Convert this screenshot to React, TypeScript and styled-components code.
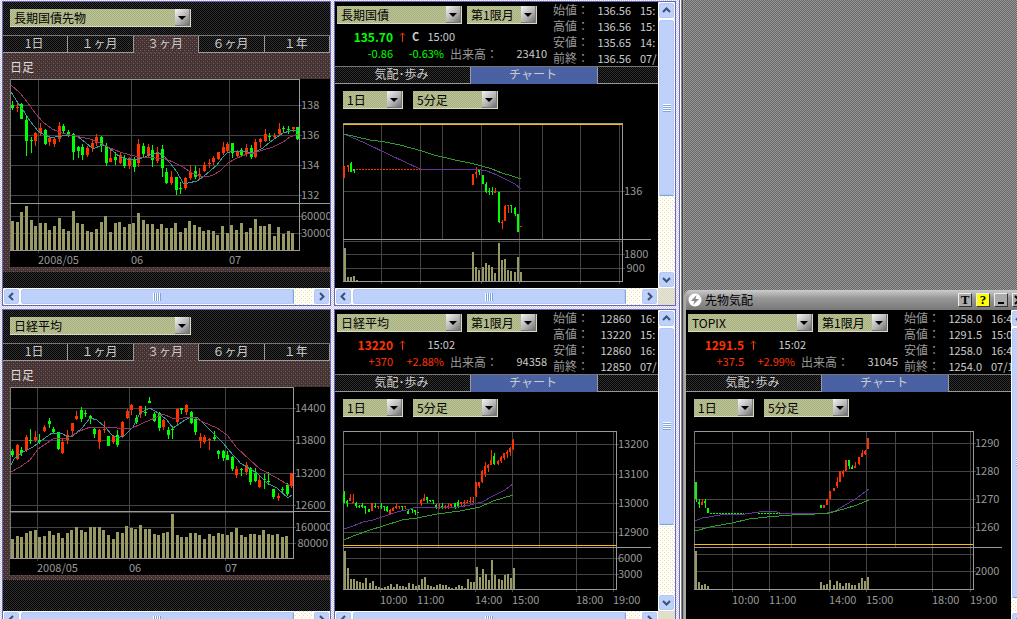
import React from "react";
import styled, { createGlobalStyle, css } from "styled-components";

const GlobalStyle = createGlobalStyle`
  html, body { margin: 0; height: 100%; background: #808080; }
  body {
    font: 12px/16px "Noto Sans CJK JP", sans-serif;
    color: #ccc;
    overflow: hidden;
  }
  *, *::before, *::after { box-sizing: border-box; }
  #root { height: 100%; }
`;

const checker = (a: string, b: string) =>
  `repeating-conic-gradient(${a} 0 25%, ${b} 0 50%) 0 0 / 2px 2px`;
const dots = (color: string, at: string) =>
  `radial-gradient(circle at 0 0, ${color} 1px, transparent 1px) ${at} / 4px 4px`;

const DARK = checker("#000", "#333");
const MAROON = `${dots("#666", "0 0")}, ${dots("#666", "2px 2px")}, ${dots("#633", "2px 0")}, ${dots("#633", "0 2px")}, #433`;
const BLUE = checker("#446aa4", "#5058a4");
const LAVENDER = checker("#c6c6f0", "#fff");
const PURPLE = "#6a66b4";

/* ---------- page frame ---------- */

const Desktop = styled.main`
  display: grid;
  grid-template-columns: 329fr 342fr 338fr;
  gap: 3px;
  height: 100%;
  padding-left: 2px;
  overflow: hidden;
  background: ${LAVENDER};
`;

const Stack = styled.div`
  display: flex;
  flex-direction: column;
  gap: 3px;
  padding-top: 1px;
  min-width: 0;
`;

const Panel = styled.section<{ $body: number }>`
  display: grid;
  grid-template-columns: minmax(0, 1fr) auto;
  grid-template-rows: ${(p) => p.$body}px 17px;
  flex: none;
  border: 1px solid ${PURPLE};
`;

const PanelBody = styled.div<{ $dark?: boolean }>`
  overflow: hidden;
  background: ${(p) => (p.$dark ? DARK : "#000")};
`;

const Corner = styled.div`
  background: ${checker("#e8e4c8", "#d8d8d0")};
`;

/* ---------- scroll bars ---------- */

const Bar = styled.div<{ $vertical?: boolean }>`
  display: flex;
  flex-direction: ${(p) => (p.$vertical ? "column" : "row")};
  ${(p) => (p.$vertical ? "width: 17px;" : "height: 17px;")}
  background: ${dots("#e4d4c4", "0 0")}, ${dots("#e4d4d4", "2px 2px")}, #fffff4;
`;

const face = css`
  background: ${checker("#c6d0ff", "#b6d2f6")};
  border: 1px solid #fff;
  border-radius: 3px;
  box-shadow: inset 0 0 0 1px #b4c8f4;
`;

const ScrollButton = styled.button`
  ${face}
  flex: none;
  display: flex;
  align-items: center;
  justify-content: center;
  width: 17px;
  height: 17px;
  padding: 0;
`;

const Thumb = styled.div<{ $size: number; $vertical?: boolean }>`
  ${face}
  flex: ${(p) => p.$size} 1 0;
  display: flex;
  align-items: center;
  justify-content: center;
  ${(p) =>
    p.$vertical ? "border-bottom-color: #7fa6dc;" : "border-right-color: #7fa6dc;"}

  &::before {
    content: "";
    width: 8px;
    height: 8px;
    background: repeating-linear-gradient(
      ${(p) => (p.$vertical ? "180deg" : "90deg")},
      #fff 0 1px,
      #7ea4e4 1px 2px
    );
  }
`;

const Rest = styled.div<{ $size: number }>`
  flex: ${(p) => p.$size} 1 0;
`;

const turns = { left: 0, up: 90, right: 180, down: 270 };

function Chevron({ to }: { to: keyof typeof turns }) {
  return (
    <svg width="9" height="9" viewBox="0 0 9 9" aria-hidden="true">
      <path
        d="M6 1 L2.5 4.5 L6 8"
        fill="none"
        stroke="#3c5078"
        strokeWidth="2"
        transform={`rotate(${turns[to]} 4.5 4.5)`}
      />
    </svg>
  );
}

function ScrollBar({ vertical, thumb, rest }: { vertical?: boolean; thumb: number; rest: number }) {
  return (
    <Bar $vertical={vertical}>
      <ScrollButton aria-label={vertical ? "上へ" : "左へ"}>
        <Chevron to={vertical ? "up" : "left"} />
      </ScrollButton>
      <Thumb $size={thumb} $vertical={vertical} />
      <Rest $size={rest} />
      <ScrollButton aria-label={vertical ? "下へ" : "右へ"}>
        <Chevron to={vertical ? "down" : "right"} />
      </ScrollButton>
    </Bar>
  );
}

/* ---------- drop-downs ---------- */

const Picker = styled.span<{ $width: number }>`
  position: relative;
  display: block;
  flex: none;
  width: ${(p) => p.$width}px;
  height: 18px;
  border: solid #ddd8c0;
  border-width: 0 1px 1px 0;
  background: ${checker("#a2b27e", "#c2c298")};

  &::before {
    content: "";
    position: absolute;
    inset: 0 0 0 auto;
    width: 15px;
    background: linear-gradient(135deg, #f4f4f4, #b0b0b0 60%, #707070);
    border: solid #777;
    border-width: 0 1px 1px 0;
  }
  &::after {
    content: "";
    position: absolute;
    top: 7px;
    right: 4px;
    border: solid transparent;
    border-width: 4px 4px 0;
    border-top-color: #000;
  }
`;

const Select = styled.select`
  position: relative;
  z-index: 1;
  appearance: none;
  display: block;
  width: 100%;
  height: 17px;
  padding: 0 16px 0 4px;
  border: 0;
  background: transparent;
  color: #000;
  font: 12px/16px "Noto Sans CJK JP", sans-serif;
`;

function DropDown({ label, value, width }: { label: string; value: string; width: number }) {
  return (
    <Picker $width={width}>
      <Select aria-label={label} defaultValue={value}>
        <option>{value}</option>
      </Select>
    </Picker>
  );
}

/* ---------- tabs ---------- */

const Tabs = styled.div<{ $columns: string }>`
  display: grid;
  grid-template-columns: ${(p) => p.$columns};
  height: 18px;
  border-top: 1px solid #777;
  background: ${DARK};
`;

const Tab = styled.button<{ $active?: string }>`
  padding: 0 2px 2px 0;
  border: solid #999;
  border-width: 0 1px 1px 0;
  background: none;
  color: #ccc;
  font: 12px/14px "Noto Sans CJK JP", sans-serif;
  text-align: center;
  ${(p) => p.$active && css`background: ${p.$active}; border-bottom: 0; padding-bottom: 3px;`}
`;

const TabRest = styled.div`
  border-bottom: 1px solid #999;
`;

/* ---------- charts ---------- */

type Candle = [string, number, number, number, number];

interface ChartData {
  view: [number, number, number, number];
  frame: { left: number; right: number; top: number; mid: number; bottom: number };
  tail: number;
  gridX: [number, string][];
  shortX?: number[];
  gridY: [number, string][];
  extraY?: number[];
  limit?: number;
  dateY: number;
  lines: [string, string][];
  dashes?: [string, number, number, number][];
  candles: [number, ...Candle][];
  bars: [number, number][];
  barWidth: number;
}

const Plot = styled.svg`
  display: block;
  text {
    font: 11px "Noto Sans CJK JP", sans-serif;
    fill: #999;
    white-space: pre;
  }
`;

const colours: Record<string, string> = { g: "#0f0", r: "#f30" };

function Chart({ data, label }: { data: ChartData; label: string }) {
  const { view, frame: f } = data;
  return (
    <Plot width={view[2]} height={view[3]} viewBox={view.join(" ")} role="img" aria-label={label}>
      <g shapeRendering="crispEdges">
        {data.gridX.map(([x]) => (
          <rect key={x} x={x} y={f.top} width="1" height={f.bottom - f.top + 3} fill="#444" />
        ))}
        {(data.shortX ?? []).map((x) => (
          <rect key={x} x={x} y={f.top} width="1" height={f.mid - f.top} fill="#444" />
        ))}
        {data.gridY.map(([y]) => (
          <rect key={y} x={f.left} y={y} width={f.right - f.left + 3} height="1" fill="#444" />
        ))}
        {(data.extraY ?? []).map((y) => (
          <rect key={y} x={f.left} y={y} width={f.right - f.left} height="1" fill="#444" />
        ))}
        {data.bars.map(([x, h], i) => (
          <rect key={i} x={Math.round(x - data.barWidth / 2)} y={f.bottom - h} width={data.barWidth} height={h} fill="#996" />
        ))}
        <rect x={f.left} y={f.top} width={f.right - f.left} height="1" fill="#999" />
        <rect x={f.left} y={f.top} width="1" height={f.bottom - f.top} fill="#777" />
        <rect x={f.right} y={f.top} width="1" height={f.bottom - f.top + 1} fill="#999" />
        <rect x={f.left} y={f.mid} width={data.tail - f.left} height="1" fill="#999" />
        <rect x={f.left} y={f.bottom} width={f.right - f.left} height="1" fill="#999" />
        {data.limit && (
          <rect x={f.left} y={data.limit} width={f.right - f.left} height="1" fill="#fb0" />
        )}
        {(data.dashes ?? []).map(([c, x1, x2, y]) => (
          <path key={x1} d={`M${x1} ${y}.5H${x2}`} stroke={colours[c]} strokeDasharray="2 1" />
        ))}
        {data.candles.map(([x, c, high, low, top, bottom], i) => (
          <g key={i} fill={colours[c]}>
            <rect x={Math.round(x)} y={high} width="1" height={low - high} />
            <rect
              x={Math.round(x) - 1}
              y={top}
              width={data.barWidth > 2 ? 3 : 2}
              height={Math.max(bottom - top, 1)}
            />
          </g>
        ))}
        {data.lines.map(([stroke, points]) => (
          <polyline key={points} points={points} fill="none" stroke={stroke} />
        ))}
      </g>
      {data.gridY.map(([y, t]) => (
        <text key={t} x={f.right + 2} y={y + 4}>{t}</text>
      ))}
      {data.gridX.map(([x, t]) => (
        <text key={t} x={x} y={data.dateY}>{t}</text>
      ))}
    </Plot>
  );
}

const spread = (start: number, step: number, list: Candle[]) =>
  list.map((c, i) => [start + step * i, ...c] as [number, ...Candle]);
const columns = (start: number, step: number, list: number[]) =>
  list.map((h, i) => [start + step * i, h] as [number, number]);

const TEAL = "#399";
const ROSE = "#936";
const VIOLET = "#639";
const LEAF = "#393";

const bondDaily: ChartData = {
  view: [10, 79, 320, 188],
  frame: { left: 10, right: 299, top: 79, mid: 203, bottom: 250 },
  tail: 330,
  gridX: [[38, "2008/05"], [131, "06"], [229, "07"]],
  gridY: [[105, "138"], [135, "136"], [165, "134"], [195, "132"], [216, "60000"], [233, "30000"]],
  dateY: 264,
  barWidth: 3,
  lines: [
    [TEAL, "11,92 18,103 23,110 30,121 38,131 45,135 50,137 55,137 62,136 72,135 78,137 85,142 93,149 102,145 107,146 115,153 120,157 127,159 134,160 142,158 150,155 158,153 163,155 170,163 177,172 183,183 188,183 197,181 203,177 210,171 217,165 222,158 227,153 233,151 240,151 248,152 255,152 263,148 270,142 277,137 283,133 290,131 298,130"],
    [ROSE, "11,85 20,93 28,103 35,113 43,122 52,129 62,133 70,135 80,137 90,139 100,143 110,148 120,152 130,155 140,157 155,158 163,158 173,162 183,167 192,173 200,176 207,177 213,175 220,171 228,163 237,158 247,154 254,153 263,150 273,147 283,142 290,137 298,134"],
  ],
  candles: spread(12, 4.68, [
    ["g", 101, 110, 105, 108], ["r", 103, 112, 107, 108], ["g", 103, 119, 104, 119], ["g", 115, 156, 120, 141],
    ["g", 137, 153, 140, 141], ["r", 132, 146, 133, 141], ["r", 123, 136, 128, 133], ["g", 129, 145, 130, 144],
    ["r", 136, 146, 138, 142], ["r", 137, 147, 139, 144], ["r", 122, 142, 126, 139], ["g", 124, 133, 126, 131],
    ["g", 130, 137, 132, 135], ["g", 133, 160, 134, 152], ["g", 146, 158, 147, 151], ["g", 144, 160, 147, 155],
    ["r", 146, 157, 148, 155], ["r", 141, 152, 143, 148], ["r", 134, 146, 137, 143], ["g", 136, 152, 137, 145],
    ["g", 143, 166, 146, 163], ["r", 150, 162, 158, 162], ["g", 152, 165, 157, 160], ["r", 153, 164, 155, 163],
    ["g", 155, 168, 158, 166], ["r", 157, 169, 158, 166], ["g", 157, 172, 159, 167], ["r", 139, 167, 144, 163],
    ["g", 143, 157, 146, 154], ["r", 144, 157, 147, 155], ["g", 145, 167, 150, 160], ["r", 147, 163, 152, 161],
    ["g", 145, 177, 149, 168], ["g", 168, 184, 172, 183], ["r", 171, 185, 177, 183], ["g", 177, 195, 177, 190],
    ["g", 182, 194, 188, 189], ["r", 177, 190, 178, 188], ["r", 165, 180, 172, 178], ["g", 166, 179, 171, 177],
    ["r", 168, 179, 174, 176], ["r", 162, 172, 165, 171], ["r", 159, 168, 163, 164], ["r", 156, 165, 158, 162],
    ["r", 152, 160, 152, 159], ["r", 142, 155, 147, 153], ["r", 142, 153, 144, 151], ["g", 143, 158, 143, 153],
    ["r", 150, 157, 151, 156], ["g", 148, 157, 150, 155], ["r", 144, 157, 148, 154], ["g", 145, 159, 148, 157],
    ["r", 139, 158, 142, 157], ["r", 138, 148, 139, 142], ["r", 129, 142, 134, 141], ["g", 133, 141, 136, 137],
    ["r", 133, 139, 136, 137], ["r", 123, 135, 129, 134], ["g", 126, 133, 128, 129], ["g", 126, 134, 129, 130],
    ["r", 127, 132, 127, 129], ["g", 127, 140, 127, 139],
  ]),
  bars: columns(12.5, 4.67, [
    29, 28, 38, 44, 30, 24, 27, 27, 20, 24, 32, 21, 19, 39, 27, 26, 19, 18, 21, 28, 34, 18, 27, 28, 23, 26, 27, 37, 30, 26, 26,
    21, 26, 22, 22, 27, 18, 22, 29, 25, 23, 19, 20, 19, 15, 24, 17, 25, 20, 27, 18, 22, 31, 24, 24, 26, 14, 23, 16, 19, 17,
  ]),
};

const nikkeiDaily: ChartData = {
  view: [10, 79, 320, 188],
  frame: { left: 10, right: 293, top: 79, mid: 203, bottom: 250 },
  tail: 330,
  gridX: [[37, "2008/05"], [129, "06"], [225, "07"]],
  gridY: [[100, "14400"], [132, "13800"], [165, "13200"], [197, "12600"], [219, "160000"], [235, " 80000"]],
  extraY: [204],
  dateY: 264,
  barWidth: 3,
  lines: [
    [TEAL, "11,157 14,151 23,144 33,139 42,132 52,125 62,125 67,129 73,128 82,120 90,110 97,112 105,119 112,127 118,130 125,127 133,119 140,105 150,100 158,105 167,112 173,120 182,114 190,109 197,109 205,117 213,125 223,135 233,147 238,152 240,155 257,165 267,175 277,180 288,190 292,187"],
    [ROSE, "11,164 20,159 30,152 38,141 53,131 67,130 80,123 90,119 103,119 117,120 130,121 143,115 155,110 163,106 172,110 183,110 193,109 203,114 217,120 227,127 237,140 250,152 260,161 277,170 290,178"],
  ],
  candles: spread(12, 4.58, [
    ["g", 141, 149, 143, 147], ["r", 136, 152, 137, 151], ["g", 139, 148, 142, 145], ["r", 127, 144, 129, 142],
    ["g", 121, 136, 132, 133], ["r", 123, 134, 129, 132], ["g", 126, 136, 132, 134], ["r", 117, 124, 119, 123],
    ["g", 110, 120, 113, 116], ["g", 119, 125, 121, 124], ["g", 124, 142, 124, 141], ["r", 130, 146, 134, 145],
    ["r", 122, 136, 127, 132], ["r", 115, 127, 115, 123], ["r", 103, 112, 108, 111], ["g", 99, 114, 102, 111],
    ["g", 102, 109, 105, 106], ["g", 107, 116, 108, 111], ["g", 119, 130, 121, 126], ["r", 121, 141, 122, 134],
    ["r", 113, 125, 121, 122], ["g", 128, 138, 128, 138], ["r", 127, 136, 128, 134], ["g", 122, 139, 127, 137],
    ["r", 113, 130, 114, 129], ["r", 101, 111, 103, 110], ["r", 96, 107, 97, 102], ["g", 107, 116, 110, 114],
    ["r", 98, 110, 98, 106], ["g", 98, 108, 104, 105], ["g", 89, 95, 93, 95], ["g", 104, 114, 106, 113],
    ["g", 104, 123, 105, 120], ["r", 111, 122, 112, 119], ["g", 119, 131, 122, 127], ["g", 118, 131, 121, 122],
    ["r", 100, 116, 101, 114], ["g", 100, 106, 100, 102], ["r", 96, 107, 97, 104], ["g", 103, 116, 104, 115],
    ["g", 109, 127, 111, 124], ["r", 125, 140, 129, 133], ["r", 127, 136, 129, 134], ["r", 130, 142, 131, 132],
    ["g", 123, 133, 129, 131], ["g", 142, 151, 143, 146], ["g", 142, 153, 143, 150], ["g", 143, 152, 147, 152],
    ["g", 148, 163, 149, 161], ["r", 158, 170, 161, 167], ["g", 160, 168, 161, 162], ["r", 154, 167, 157, 164],
    ["g", 159, 177, 160, 174], ["g", 160, 174, 165, 173], ["r", 168, 180, 172, 179], ["g", 166, 181, 171, 172],
    ["g", 164, 177, 173, 174], ["g", 181, 191, 181, 189], ["r", 185, 193, 188, 190], ["g", 179, 184, 181, 182],
    ["g", 175, 188, 177, 186], ["r", 165, 180, 165, 178],
  ]),
  bars: columns(12.5, 4.57, [
    19, 22, 21, 25, 27, 28, 21, 22, 27, 23, 25, 20, 25, 28, 31, 28, 26, 31, 31, 31, 28, 23, 19, 26, 25, 32, 30, 29, 33, 29, 29,
    24, 23, 25, 26, 44, 23, 21, 21, 25, 25, 23, 19, 24, 22, 25, 24, 23, 26, 30, 23, 21, 24, 24, 23, 28, 24, 23, 24, 21, 22,
  ]),
};

const times = ["10:00", "11:00", "14:00", "15:00", "18:00", "19:00"];
const axis = (xs: number[]) => xs.map((x, i) => [x, times[i]] as [number, string]);

const bondIntraday: ChartData = {
  view: [335, 112, 323, 190],
  frame: { left: 343, right: 622, top: 123, mid: 239, bottom: 281 },
  tail: 651,
  gridX: axis([381, 420, 481, 519, 580, 619]),
  shortX: [442, 542],
  gridY: [[191, "136"], [254, "1800"], [268, " 900"]],
  extraY: [241],
  limit: 124,
  dateY: 296,
  barWidth: 2,
  lines: [
    [VIOLET, "344,134 365,143 390,155 420,169 477,169 487,171 497,175 507,180 515,184 521,189"],
    [LEAF, "344,134 370,140 385,142 400,145 422,151 434,155 455,160 470,163 482,166 492,169 502,173 512,176 521,179"],
  ],
  dashes: [["r", 356, 420, 169]],
  candles: [
    [344, "r", 166, 178, 166, 178], [348, "r", 165, 172, 165, 167], [351, "g", 162, 172, 163, 172], [354, "g", 169, 173, 169, 171],
    [473, "r", 174, 185, 174, 185], [476, "r", 167, 178, 172, 174], [479, "g", 169, 175, 169, 172], [483, "g", 175, 184, 175, 184],
    [486, "g", 182, 193, 184, 192], [489, "g", 188, 195, 191, 192], [492, "g", 187, 195, 191, 192], [495, "r", 188, 193, 191, 193],
    [499, "g", 192, 223, 192, 222], [502, "r", 220, 229, 222, 223], [505, "r", 205, 221, 206, 221], [508, "r", 205, 213, 205, 206],
    [511, "g", 205, 213, 205, 206], [515, "g", 207, 216, 208, 214], [518, "g", 214, 232, 214, 232], [521, "r", 226, 227, 226, 227],
  ],
  bars: [
    [345, 33], [348, 4], [351, 4], [354, 5], [357, 1], [473, 29], [476, 14], [479, 11], [483, 14], [486, 18], [489, 16],
    [492, 14], [495, 8], [499, 38], [502, 21], [505, 22], [508, 11], [511, 10], [515, 9], [518, 24], [521, 9],
  ],
};

const nikkeiIntraday: ChartData = {
  view: [335, 112, 323, 190],
  frame: { left: 343, right: 616, top: 123, mid: 239, bottom: 281 },
  tail: 651,
  gridX: axis([380, 417, 475, 512, 576, 613]),
  shortX: [438, 539],
  gridY: [[136, "13200"], [166, "13100"], [195, "13000"], [224, "12900"], [250, "6000"], [266, "3000"]],
  limit: 237,
  dateY: 296,
  barWidth: 2,
  lines: [
    [VIOLET, "344,221 353,218 363,214 373,212 385,208 397,204 410,201 417,199 440,199 457,199 470,197 482,194 493,188 505,182 513,176"],
    [LEAF, "344,232 353,228 370,222 383,218 402,212 417,210 437,206 460,203 480,199 493,193 513,187"],
  ],
  candles: spread(344, 3.07, [
    ["g", 183, 195, 186, 195], ["g", 192, 199, 193, 195], ["r", 186, 193, 190, 193], ["r", 186, 195, 194, 195],
    ["g", 194, 200, 195, 198], ["g", 197, 200, 198, 199], ["g", 195, 200, 197, 199], ["g", 198, 206, 198, 200],
    ["g", 201, 204, 201, 204], ["r", 195, 203, 195, 203], ["g", 195, 200, 198, 199], ["r", 198, 201, 198, 199],
    ["g", 195, 201, 198, 199], ["g", 198, 203, 198, 199], ["g", 198, 204, 199, 203], ["r", 201, 207, 202, 206],
    ["r", 199, 203, 200, 203], ["r", 195, 201, 198, 200], ["r", 198, 201, 198, 199], ["g", 198, 202, 198, 199],
    ["r", 198, 201, 198, 199], ["g", 202, 206, 203, 206], ["g", 200, 205, 201, 202], ["g", 202, 207, 202, 204],
    ["g", 204, 205, 204, 205], ["r", 191, 198, 192, 195], ["r", 186, 193, 190, 193], ["g", 189, 195, 189, 192],
    ["g", 192, 194, 192, 193], ["g", 192, 196, 192, 193], ["g", 196, 201, 197, 200], ["r", 195, 201, 199, 200],
    ["g", 195, 201, 198, 200], ["r", 197, 201, 198, 199], ["r", 195, 201, 198, 199], ["r", 196, 200, 196, 198],
    ["g", 195, 201, 195, 199], ["g", 192, 200, 194, 199], ["r", 194, 199, 194, 196], ["r", 192, 199, 194, 195],
    ["r", 192, 195, 194, 195], ["r", 189, 195, 193, 194], ["r", 189, 195, 193, 194], ["r", 174, 189, 174, 188],
    ["r", 174, 180, 174, 178], ["r", 162, 175, 163, 174], ["r", 154, 169, 158, 166], ["r", 156, 164, 157, 160],
    ["r", 142, 157, 152, 157], ["g", 145, 157, 148, 156], ["r", 152, 157, 153, 156], ["r", 148, 155, 149, 153],
    ["r", 145, 152, 145, 150], ["r", 142, 150, 144, 146], ["r", 139, 148, 140, 144], ["r", 131, 142, 132, 141],
  ]),
  bars: columns(345, 3.07, [
    38, 21, 10, 10, 8, 7, 6, 11, 6, 8, 3, 2, 1, 2, 3, 5, 2, 5, 3, 3, 2, 6, 5, 3, 4, 10, 12, 4, 3, 2, 4, 5, 4, 4, 2, 1, 2, 4, 3, 1,
    10, 7, 7, 22, 12, 20, 15, 9, 29, 14, 10, 9, 14, 15, 11, 21,
  ]),
};

const topixIntraday: ChartData = {
  view: [335, 112, 323, 190],
  frame: { left: 343, right: 622, top: 123, mid: 239, bottom: 281 },
  tail: 651,
  gridX: axis([381, 418, 478, 515, 581, 619]),
  shortX: [440, 544],
  gridY: [[135, "1290"], [163, "1280"], [191, "1270"], [219, "1260"], [263, "2000"]],
  extraY: [246],
  limit: 236,
  dateY: 296,
  barWidth: 2,
  lines: [
    [VIOLET, "344,213 351,210 358,209 369,207 394,206 408,204 423,203 429,205 476,205 484,203 496,196 506,190 518,181"],
    [LEAF, "344,223 359,219 381,215 398,211 416,209 441,207 464,206 478,205 493,201 506,197 518,192"],
  ],
  dashes: [["g", 359, 393, 205], ["g", 407, 430, 205]],
  candles: [
    [345, "g", 174, 194, 174, 191], [348, "g", 191, 200, 194, 196], [351, "r", 191, 197, 194, 197], [354, "g", 191, 200, 193, 195],
    [357, "g", 200, 205, 200, 205], [470, "g", 197, 200, 197, 200], [473, "r", 197, 200, 197, 200], [476, "r", 191, 197, 191, 197],
    [479, "r", 183, 191, 183, 191], [483, "r", 180, 183, 180, 183], [486, "r", 169, 180, 174, 178], [489, "r", 163, 174, 163, 174],
    [492, "r", 162, 169, 163, 166], [495, "r", 152, 163, 152, 163], [498, "g", 152, 161, 152, 158], [501, "g", 157, 161, 159, 161],
    [504, "r", 154, 160, 158, 160], [508, "r", 149, 157, 149, 156], [511, "r", 142, 149, 145, 149], [514, "r", 142, 147, 143, 146],
    [517, "r", 130, 141, 130, 141],
  ],
  bars: [
    [345, 38], [348, 7], [351, 4], [354, 5], [357, 3], [470, 7], [473, 4], [476, 5], [479, 9], [483, 4], [486, 8], [489, 6],
    [492, 3], [495, 6], [498, 6], [501, 4], [504, 4], [508, 6], [511, 11], [514, 8], [517, 12],
  ],
};

/* ---------- index panel (left) ---------- */

const IndexHead = styled.div`
  height: 33px;
  padding: 7px;
`;

const Sheet = styled.div`
  padding: 6px 0 5px 7px;
  background: ${MAROON};
`;

const SheetTitle = styled.h2`
  margin: 0;
  height: 20px;
  font: 12px/16px "Noto Sans CJK JP", sans-serif;
  color: #ddd;
`;

const ChartBox = styled.div`
  background: #000;
  overflow: hidden;
`;

function IndexPanel({ name, data, body }: { name: string; data: ChartData; body: number }) {
  return (
    <Panel $body={body}>
      <PanelBody $dark>
        <IndexHead>
          <DropDown label="銘柄" value={name} width={181} />
        </IndexHead>
        <Tabs $columns="repeat(5, 1fr)">
          <Tab>1日</Tab>
          <Tab>１ヶ月</Tab>
          <Tab $active={MAROON}>３ヶ月</Tab>
          <Tab>６ヶ月</Tab>
          <Tab>１年</Tab>
        </Tabs>
        <Sheet>
          <SheetTitle>日足</SheetTitle>
          <ChartBox>
            <Chart data={data} label={`${name} 日足`} />
          </ChartBox>
        </Sheet>
      </PanelBody>
      <div />
      <ScrollBar thumb={276} rest={19} />
    </Panel>
  );
}

/* ---------- quote view (centre and right) ---------- */

const Quote = styled.div`
  display: grid;
  grid-template-columns: 218px minmax(0, 1fr);
  height: 64px;
`;

const Pickers = styled.div`
  display: flex;
  gap: 5px;
  padding: 4px 0 4px 2px;
`;

const Row = styled.div<{ $columns: string }>`
  display: grid;
  grid-template-columns: ${(p) => p.$columns};
  line-height: 17px;
  white-space: pre;
`;

const Num = styled.span<{ $tone?: string; $bold?: boolean }>`
  color: ${(p) => p.$tone ?? "#ccc"};
  font-size: ${(p) => (p.$bold ? 12 : 11)}px;
  font-weight: ${(p) => (p.$bold ? 700 : 400)};
  text-align: right;
`;

const Flag = styled.span`
  font-size: 11px;
  font-weight: 700;
`;

const Arrow = styled.svg`
  margin: 4px 0 0 6px;
`;

const Caption = styled.span`
  padding-left: 6px;
  color: #999;
`;

const Prices = styled.dl`
  display: grid;
  grid-template-columns: 43px 35px minmax(0, 1fr);
  grid-auto-rows: 16px;
  margin: 0;
  line-height: 16px;
  white-space: nowrap;
  overflow: hidden;

  dt { color: #999; }
  dd { margin: 0; font-size: 11px; text-align: right; }
  dd + dd { padding-left: 9px; text-align: left; }
`;

const Filters = styled.div`
  display: flex;
  gap: 10px;
  padding: 7px 0 3px 8px;
`;

interface QuoteData {
  name: string;
  price: string;
  tone: string;
  flag: string;
  time: string;
  change: string;
  rate: string;
  volume: string;
  prices: [string, string, string][];
  chart: ChartData;
}

function QuoteView({ q }: { q: QuoteData }) {
  return (
    <>
      <Quote>
        <div>
          <Pickers>
            <DropDown label="銘柄" value={q.name} width={125} />
            <DropDown label="限月" value="第1限月" width={70} />
          </Pickers>
          <Row $columns="58px 19px 14px 29px">
            <Num $tone={q.tone} $bold>{q.price}</Num>
            <Arrow width="7" height="10" viewBox="0 0 7 10" aria-label="上昇">
              <path d="M3.5 10V1M1 3.5L3.5 1L6 3.5" fill="none" stroke="#f30" />
            </Arrow>
            <Flag>{q.flag}</Flag>
            <Num>{q.time}</Num>
          </Row>
          <Row $columns="58px 51px 54px 49px">
            <Num $tone={q.tone}>{q.change}</Num>
            <Num $tone={q.tone}>{q.rate}</Num>
            <Caption>出来高：</Caption>
            <Num>{q.volume}</Num>
          </Row>
        </div>
        <Prices>
          {q.prices.map(([k, v, t]) => (
            <React.Fragment key={k}>
              <dt>{k}：</dt>
              <dd>{v}</dd>
              <dd>{t}</dd>
            </React.Fragment>
          ))}
        </Prices>
      </Quote>
      <Tabs $columns="136px 127px 1fr">
        <Tab>気配･歩み</Tab>
        <Tab $active={BLUE}>チャート</Tab>
        <TabRest />
      </Tabs>
      <Filters>
        <DropDown label="期間" value="1日" width={60} />
        <DropDown label="足種" value="5分足" width={85} />
      </Filters>
      <Chart data={q.chart} label={`${q.name} 5分足`} />
    </>
  );
}

const bond: QuoteData = {
  name: "長期国債",
  price: "135.70",
  tone: "#0f0",
  flag: "C",
  time: "15:00",
  change: "-0.86",
  rate: "-0.63%",
  volume: "23410",
  prices: [
    ["始値", "136.56", "15:"],
    ["高値", "136.56", "15:"],
    ["安値", "135.65", "14:"],
    ["前終", "136.56", "07/"],
  ],
  chart: bondIntraday,
};

const nikkei: QuoteData = {
  name: "日経平均",
  price: "13220",
  tone: "#f30",
  flag: "",
  time: "15:02",
  change: "+370",
  rate: "+2.88%",
  volume: "94358",
  prices: [
    ["始値", "12860", "16:"],
    ["高値", "13220", "15:"],
    ["安値", "12860", "16:"],
    ["前終", "12850", "07/"],
  ],
  chart: nikkeiIntraday,
};

const topix: QuoteData = {
  name: "TOPIX",
  price: "1291.5",
  tone: "#f30",
  flag: "",
  time: "15:02",
  change: "+37.5",
  rate: "+2.99%",
  volume: "31045",
  prices: [
    ["始値", "1258.0", "16:4"],
    ["高値", "1291.5", "15:0"],
    ["安値", "1258.0", "16:4"],
    ["前終", "1254.0", "07/1"],
  ],
  chart: topixIntraday,
};

function QuotePanel({ q, body, thumb, rest }: { q: QuoteData; body: number; thumb: number; rest: number }) {
  return (
    <Panel $body={body}>
      <PanelBody>
        <QuoteView q={q} />
      </PanelBody>
      <ScrollBar vertical thumb={thumb} rest={rest} />
      <ScrollBar thumb={274} rest={15} />
      <Corner />
    </Panel>
  );
}

/* ---------- desktop area and floating window ---------- */

const Workspace = styled.div`
  display: flex;
  flex-direction: column;
  min-width: 0;
  padding-top: 290px;
  border-left: 1px solid ${PURPLE};
  background:
    linear-gradient(90deg, #fff 0 1px, #888 1px 2px, #444 2px 3px, #999 3px 4px) 0 0 / 4px 100% no-repeat,
    ${checker("#666", "#999")};
`;

const Window = styled.section`
  display: flex;
  flex: 1;
  flex-direction: column;
  min-height: 0;
  margin-left: 4px;
  border-left: 2px solid #aaa;
  border-radius: 6px 0 0 0;
  background: #aaa;
  overflow: hidden;
`;

const TitleBar = styled.header`
  display: flex;
  align-items: center;
  gap: 3px;
  height: 20px;
  padding-left: 2px;
  background: linear-gradient(#ccc, #999 40%, #777);
  color: #000;
`;

const Title = styled.h1`
  flex: 1;
  margin: 0;
  font: 12px/18px "Noto Sans CJK JP", sans-serif;
`;

const WindowButtons = styled.div`
  display: flex;
  gap: 4px;
  margin-right: -9px;
`;

const WindowButton = styled.button<{ $face?: string }>`
  display: flex;
  align-items: center;
  justify-content: center;
  width: 14px;
  height: 14px;
  padding: 0;
  border: 1px solid;
  border-color: #eee #333 #333 #eee;
  background: ${(p) => p.$face ?? "#aaa"};
  color: #000;
  font: bold 13px/12px "Liberation Serif", serif;
`;

const Glyph = styled.svg`
  display: block;
  flex: none;
`;

const WindowBody = styled.div`
  display: grid;
  grid-template-columns: minmax(0, 1fr) 6px;
  flex: 1;
  min-height: 0;
  background: #000;
  overflow: hidden;
`;

const ViewClip = styled.div`
  overflow: hidden;
`;

export default function App() {
  return (
    <>
      <GlobalStyle />
      <Desktop>
        <Stack>
          <IndexPanel name="長期国債先物" data={bondDaily} body={286} />
          <IndexPanel name="日経平均" data={nikkeiDaily} body={301} />
        </Stack>
        <Stack>
          <QuotePanel q={bond} body={286} thumb={176} rest={75} />
          <QuotePanel q={nikkei} body={301} thumb={198} rest={70} />
        </Stack>
        <Workspace>
          <Window>
            <TitleBar>
              <svg width="14" height="14" viewBox="0 0 14 14" aria-hidden="true">
                <circle cx="7" cy="7" r="6.5" fill="#fff" />
                <path d="M8.5 2L3 8H6.5L5 12L11 6H7.5Z" fill="#888" />
              </svg>
              <Title>先物気配</Title>
              <WindowButtons>
                <WindowButton aria-label="文字サイズ">T</WindowButton>
                <WindowButton aria-label="ヘルプ" $face="#ff0">?</WindowButton>
                <WindowButton aria-label="最小化">
                  <Glyph width="12" height="12" viewBox="0 0 12 12">
                    <path d="M3 9H9" stroke="#000" strokeWidth="2" />
                  </Glyph>
                </WindowButton>
                <WindowButton aria-label="閉じる">
                  <Glyph width="12" height="12" viewBox="0 0 12 12">
                    <path d="M2 2L10 10M10 2L2 10" stroke="#000" strokeWidth="2" />
                  </Glyph>
                </WindowButton>
              </WindowButtons>
            </TitleBar>
            <WindowBody>
              <ViewClip>
                <QuoteView q={topix} />
              </ViewClip>
              <ScrollBar vertical thumb={261} rest={14} />
            </WindowBody>
          </Window>
        </Workspace>
      </Desktop>
    </>
  );
}
